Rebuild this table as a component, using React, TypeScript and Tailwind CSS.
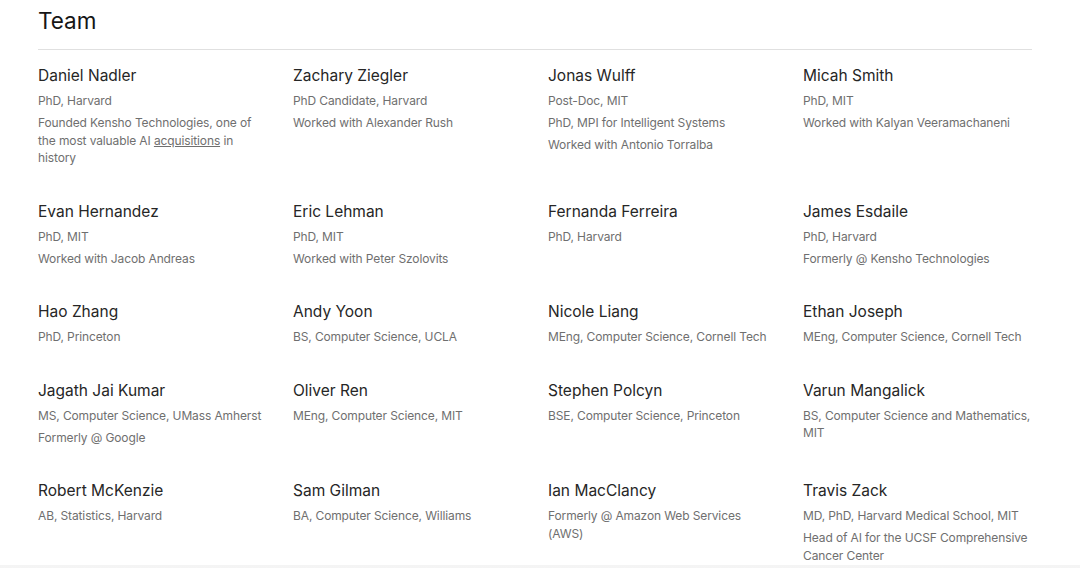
import React from "react";

type Member = {
  name: string;
  lines: React.ReactNode[];
};

const team: Member[] = [
  {
    name: "Daniel Nadler",
    lines: [
      "PhD, Harvard",
      <>
        Founded Kensho Technologies, one of the most valuable AI{" "}
        <a href="#" className="underline">
          acquisitions
        </a>{" "}
        in history
      </>,
    ],
  },
  { name: "Zachary Ziegler", lines: ["PhD Candidate, Harvard", "Worked with Alexander Rush"] },
  {
    name: "Jonas Wulff",
    lines: ["Post-Doc, MIT", "PhD, MPI for Intelligent Systems", "Worked with Antonio Torralba"],
  },
  { name: "Micah Smith", lines: ["PhD, MIT", "Worked with Kalyan Veeramachaneni"] },
  { name: "Evan Hernandez", lines: ["PhD, MIT", "Worked with Jacob Andreas"] },
  { name: "Eric Lehman", lines: ["PhD, MIT", "Worked with Peter Szolovits"] },
  { name: "Fernanda Ferreira", lines: ["PhD, Harvard"] },
  { name: "James Esdaile", lines: ["PhD, Harvard", "Formerly @ Kensho Technologies"] },
  { name: "Hao Zhang", lines: ["PhD, Princeton"] },
  { name: "Andy Yoon", lines: ["BS, Computer Science, UCLA"] },
  { name: "Nicole Liang", lines: ["MEng, Computer Science, Cornell Tech"] },
  { name: "Ethan Joseph", lines: ["MEng, Computer Science, Cornell Tech"] },
  {
    name: "Jagath Jai Kumar",
    lines: ["MS, Computer Science, UMass Amherst", "Formerly @ Google"],
  },
  { name: "Oliver Ren", lines: ["MEng, Computer Science, MIT"] },
  { name: "Stephen Polcyn", lines: ["BSE, Computer Science, Princeton"] },
  { name: "Varun Mangalick", lines: ["BS, Computer Science and Mathematics, MIT"] },
  { name: "Robert McKenzie", lines: ["AB, Statistics, Harvard"] },
  { name: "Sam Gilman", lines: ["BA, Computer Science, Williams"] },
  { name: "Ian MacClancy", lines: ["Formerly @ Amazon Web Services (AWS)"] },
  {
    name: "Travis Zack",
    lines: [
      "MD, PhD, Harvard Medical School, MIT",
      "Head of AI for the UCSF Comprehensive Cancer Center",
    ],
  },
];

const Person = ({ member }: { member: Member }) => (
  <div>
    <h3 className="text-[15.5px] leading-[24px] text-[#262626]">{member.name}</h3>
    <div className="mt-[4px] flex flex-col gap-[4.5px]">
      {member.lines.map((line, i) => (
        <p key={i} className="text-[12px] leading-[17.5px] tracking-[-0.12px] text-[#6f6f6f]">
          {line}
        </p>
      ))}
    </div>
  </div>
);

export default function App() {
  return (
    <div
      className="min-h-screen bg-white"
      style={{ fontFamily: "Inter, 'Noto Sans', sans-serif" }}
    >
      <section className="px-[38px] pt-[7px] pb-[1px] w-[1070px]">
        <h2 className="text-[22.5px] leading-[28px] text-[#161616] pb-[14px] border-b border-[#e0e0e0]">
          Team
        </h2>
        <div className="mt-[14px] grid grid-cols-4 gap-x-[26px] gap-y-[33px]">
          {team.map((m) => (
            <Person key={m.name} member={m} />
          ))}
        </div>
      </section>
      <div className="h-[40px] bg-gradient-to-b from-[#f4f4f4] to-[#fafafa]" />
    </div>
  );
}
